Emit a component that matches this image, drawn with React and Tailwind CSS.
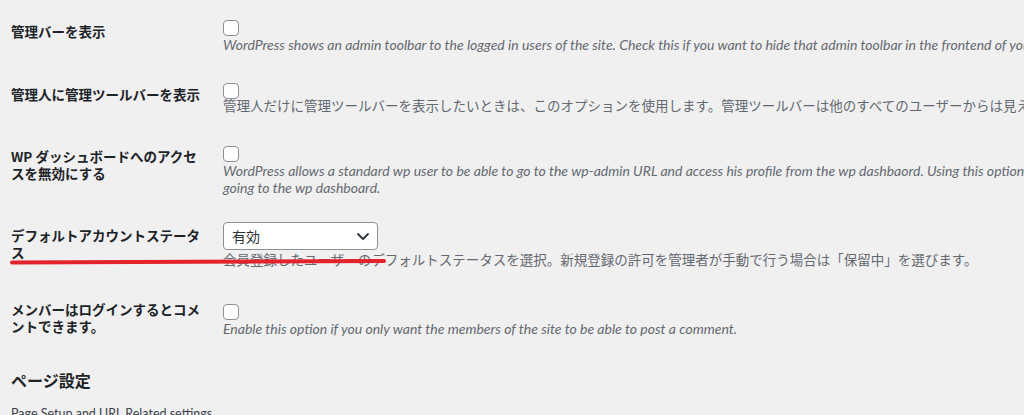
// Settings form: members / admin bar options, with a red annotation stroke.

const JP = { fontFamily: '"Noto Sans CJK JP", sans-serif' };
const DESC = { fontFamily: 'Lato, "Noto Sans CJK JP", sans-serif' };

function Checkbox() {
  return <div className="w-4 h-4 rounded-[4px] border border-[#8c8f94] bg-white" />;
}

// English help texts are italic, the Japanese ones upright and slightly smaller
function Desc({ children, jp = false, className = "" }) {
  return (
    <p
      style={DESC}
      className={`leading-[17px] text-[#646970] whitespace-nowrap ${jp ? "text-[13.5px]" : "text-[14px] italic"} ${className}`}
    >
      {children}
    </p>
  );
}

function Row({ label, labelTop, contentTop, rowTop, children }) {
  return (
    <div className={`flex items-start ${rowTop}`}>
      <div
        style={JP}
        className={`w-[196px] shrink-0 text-[13.5px] leading-[17px] font-bold text-[#1d2327] ${labelTop}`}
      >
        {label}
      </div>
      <div className={`ml-[16px] min-w-0 ${contentTop}`}>{children}</div>
    </div>
  );
}

export default function App() {
  return (
    <div className="relative w-full h-[415px] overflow-hidden bg-[#f0f0f1] pl-[11px]">
      <Row label="管理バーを表示" rowTop="pt-[20px]" labelTop="mt-[3px]" contentTop="mt-0">
        <Checkbox />
        <Desc>
          WordPress shows an admin toolbar to the logged in users of the site. Check this if you want to hide that admin toolbar in the frontend of your site.
        </Desc>
      </Row>

      <Row label="管理人に管理ツールバーを表示" rowTop="mt-[30px]" labelTop="mt-[3px]" contentTop="mt-0">
        <Checkbox />
        <Desc jp className="-mt-[1px]">
          管理人だけに管理ツールバーを表示したいときは、このオプションを使用します。管理ツールバーは他のすべてのユーザーからは見えません。
        </Desc>
      </Row>

      <Row label="WP ダッシュボードへのアクセスを無効にする" rowTop="mt-[31px]" labelTop="mt-[2px]" contentTop="mt-0">
        <Checkbox />
        <Desc>
          WordPress allows a standard wp user to be able to go to the wp-admin URL and access his profile from the wp dashbaord. Using this option will prevent users from
        </Desc>
        <Desc>going to the wp dashboard.</Desc>
      </Row>

      <Row label="デフォルトアカウントステータス" rowTop="mt-[26px]" labelTop="mt-[5px]" contentTop="mt-0">
        <div className="w-[155px] h-[28px] rounded-[4px] border border-[#8c8f94] bg-white flex items-center justify-between pl-[8px] pr-[7px]">
          <span style={JP} className="text-[14px] text-[#2c3338]">有効</span>
          <svg width="14" height="14" viewBox="0 0 14 14" fill="none">
            <polyline points="2,5 7,10 12,5" stroke="#2c3338" strokeWidth="1.8" strokeLinecap="round" strokeLinejoin="round" />
          </svg>
        </div>
        <Desc jp className="mt-[2px]">
          会員登録したユーザーのデフォルトステータスを選択。新規登録の許可を管理者が手動で行う場合は「保留中」を選びます。
        </Desc>
      </Row>

      <Row label="メンバーはログインするとコメントできます。" rowTop="mt-[32px]" labelTop="mt-0" contentTop="mt-[3px]">
        <Checkbox />
        <Desc>Enable this option if you only want the members of the site to be able to post a comment.</Desc>
      </Row>

      <h2 style={JP} className="mt-[33px] text-[16px] leading-[20px] font-bold text-[#1d2327]">
        ページ設定
      </h2>
      <p style={DESC} className="mt-[15px] text-[12.5px] leading-[17px] text-[#3c434a] whitespace-nowrap">
        Page Setup and URL Related settings
      </p>

      {/* red annotation stroke */}
      <svg className="absolute left-0 top-0 pointer-events-none" width="400" height="280" viewBox="0 0 400 280">
        <line x1="12" y1="262.5" x2="384" y2="261" stroke="#e3222b" strokeWidth="4" strokeLinecap="round" />
      </svg>
    </div>
  );
}
